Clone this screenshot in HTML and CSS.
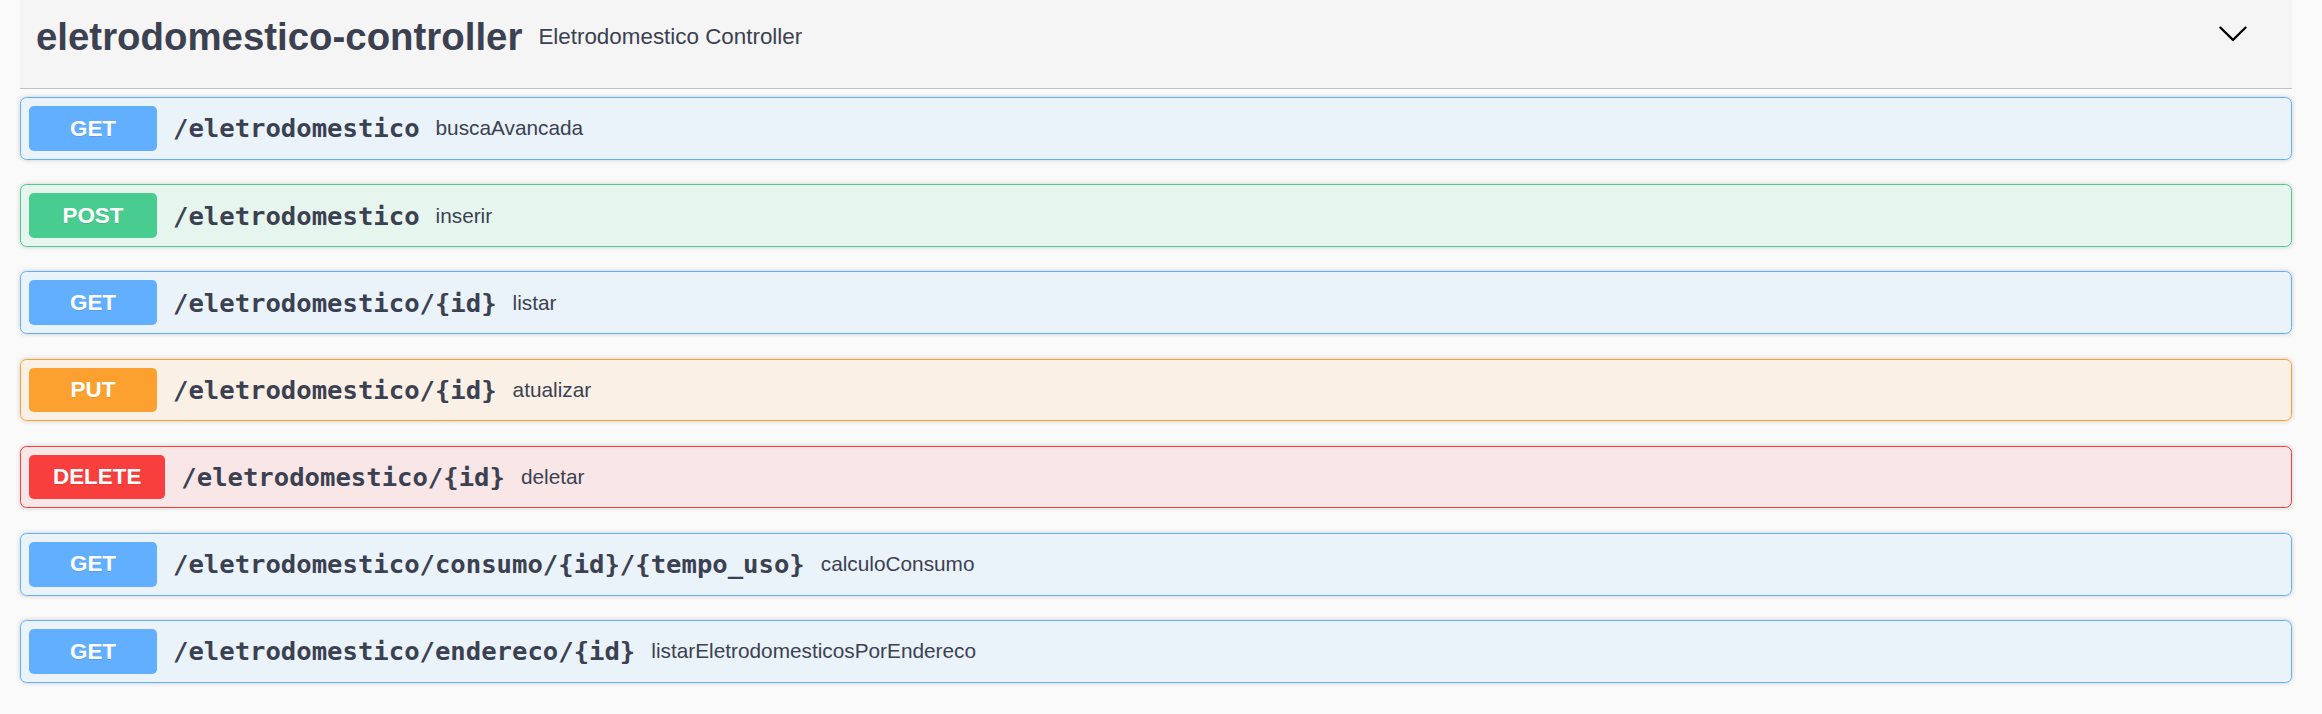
FILE: index.html
```html
<!DOCTYPE html>
<html lang="pt">
<head>
<meta charset="utf-8">
<title>eletrodomestico-controller</title>
<link rel="stylesheet" href="styles.css">
</head>
<body>
<div class="wrapper">
  <section class="tag-section">
    <h3 class="opblock-tag">
      <span class="tag-name">eletrodomestico-controller</span>
      <small class="tag-desc">Eletrodomestico Controller</small>
      <button class="expand" aria-label="collapse">
        <svg width="32" height="32" viewBox="0 0 20 20"><path fill="#000" d="M17.418 6.109c.272-.268.709-.268.979 0s.271.701 0 .969l-7.908 7.83c-.27.268-.707.268-.979 0l-7.908-7.83c-.27-.268-.27-.701 0-.969.271-.268.709-.268.979 0L10 13.25l7.418-7.141z"/></svg>
      </button>
    </h3>
    <div class="ops">
      <div class="opblock get"><span class="method">GET</span><span class="path">/eletrodomestico</span><span class="desc">buscaAvancada</span></div>
      <div class="opblock post"><span class="method">POST</span><span class="path">/eletrodomestico</span><span class="desc">inserir</span></div>
      <div class="opblock get"><span class="method">GET</span><span class="path">/eletrodomestico/{id}</span><span class="desc">listar</span></div>
      <div class="opblock put"><span class="method">PUT</span><span class="path">/eletrodomestico/{id}</span><span class="desc">atualizar</span></div>
      <div class="opblock delete"><span class="method">DELETE</span><span class="path">/eletrodomestico/{id}</span><span class="desc">deletar</span></div>
      <div class="opblock get"><span class="method">GET</span><span class="path">/eletrodomestico/consumo/{id}/{tempo_uso}</span><span class="desc">calculoConsumo</span></div>
      <div class="opblock get"><span class="method">GET</span><span class="path">/eletrodomestico/endereco/{id}</span><span class="desc">listarEletrodomesticosPorEndereco</span></div>
    </div>
  </section>
</div>
</body>
</html>
```
FILE: styles.css
```css
* { box-sizing: border-box; }
html, body { margin: 0; padding: 0; background: #fafafa; }
body { font-family: "Liberation Sans", Arial, sans-serif; color: #3b4151; }
.wrapper { padding: 0 30px 0 20px; }

.opblock-tag {
  display: flex;
  align-items: center;
  margin: 0 0 8px;
  height: 89px;
  padding: 15px 43px 29px 16px;
  background: rgba(0, 0, 0, 0.02);
  border-bottom: 1px solid rgba(59, 65, 81, 0.3);
  font-size: 38.4px;
  font-weight: 700;
  line-height: 44px;
  color: #3b4151;
}
.tag-name { white-space: nowrap; }
.tag-desc {
  flex: 1 1 auto;
  padding: 0 16px;
  font-size: 22.4px;
  font-weight: 400;
  color: #3b4151;
}
.expand {
  border: 0;
  background: none;
  padding: 0;
  margin: 0 0 8px;
  width: 32px;
  height: 32px;
  display: flex;
}

.opblock {
  display: flex;
  align-items: center;
  padding: 8px;
  margin: 0 0 24.4px;
  border: 1px solid;
  border-radius: 6.4px;
  box-shadow: 0 0 4.8px rgba(0, 0, 0, 0.19);
}
.method {
  min-width: 128px;
  padding: 9.6px 24px;
  border-radius: 4.8px;
  color: #fff;
  font-size: 22.4px;
  font-weight: 700;
  line-height: 25.6px;
  text-align: center;
  text-shadow: 0 1px 0 rgba(0, 0, 0, 0.1);
}
.path {
  padding: 0 16px;
  font-family: "DejaVu Sans Mono", monospace;
  font-size: 25.6px;
  font-weight: 700;
  color: #3b4151;
  white-space: nowrap;
}
.desc {
  flex: 1 1 auto;
  font-size: 20.8px;
  color: #3b4151;
}

.get { background: rgba(97, 175, 254, 0.1); border-color: #61affe; }
.get .method { background: #61affe; }
.post { background: rgba(73, 204, 144, 0.1); border-color: #49cc90; }
.post .method { background: #49cc90; }
.put { background: rgba(252, 161, 48, 0.1); border-color: #fca130; }
.put .method { background: #fca130; }
.delete { background: rgba(249, 62, 62, 0.1); border-color: #f93e3e; }
.delete .method { background: #f93e3e; }
```
